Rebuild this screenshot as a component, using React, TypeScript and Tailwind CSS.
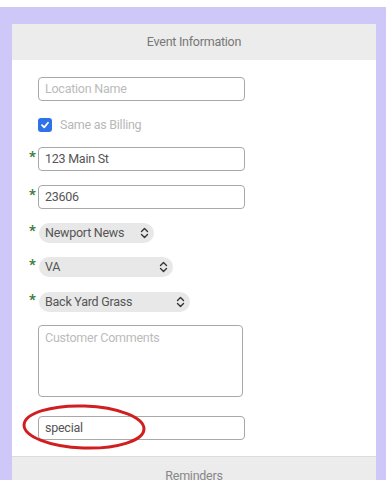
import React from "react";

const Star = ({ off }: { off: string }) => (
  <span className={`w-[9px] text-[#3f7d3a] text-[15px] font-bold leading-none ${off}`}>*</span>
);

const Chevrons = () => (
  <svg width="9" height="12" viewBox="0 0 9 12" fill="none" stroke="#333" strokeWidth="1.4" strokeLinecap="round" strokeLinejoin="round">
    <path d="M1.5 4.5 L4.5 1.5 L7.5 4.5" />
    <path d="M1.5 7.5 L4.5 10.5 L7.5 7.5" />
  </svg>
);

function Select({ label, width }: { label: string; width: string }) {
  return (
    <div className={`flex items-center justify-between h-[20px] rounded-full bg-[#e8e8e8] pl-[6px] pr-[5px] text-[12.5px] tracking-[-0.25px] text-[#555] ${width}`}>
      <span>{label}</span>
      <Chevrons />
    </div>
  );
}

const txt = "text-[12.5px] tracking-[-0.25px]";

export default function App() {
  return (
    <div className="w-[386px] h-[480px] bg-white overflow-hidden" style={{ fontFamily: "Roboto, 'Noto Sans', sans-serif" }}>
      <div className="mt-[7px] h-[473px] bg-[#cdc8f8] pt-[17px] pl-[12px] pr-[10px]">
        <div className="bg-white h-full flex flex-col overflow-hidden">
          <div className="shrink-0 h-[36px] bg-[#ececec] flex items-center justify-center text-[12.5px] tracking-[-0.25px] text-[#777]">
            Event Information
          </div>
          <div className="shrink-0 flex flex-col pl-[17px]">
            <div className={`mt-[17px] ml-[9px] w-[207px] h-[24px] border border-[#a8a8a8] rounded-[4px] flex items-center px-[6px] ${txt} text-[#bbbbbb]`}>
              Location Name
            </div>
            <div className="mt-[17px] ml-[9px] flex items-center gap-[8px] h-[14px]">
              <div className="w-[14px] h-[14px] rounded-[3px] bg-[#2f72e8] flex items-center justify-center">
                <svg width="10" height="10" viewBox="0 0 10 10" fill="none" stroke="white" strokeWidth="1.8" strokeLinecap="round" strokeLinejoin="round">
                  <path d="M2 5.2 L4.2 7.4 L8 2.8" />
                </svg>
              </div>
              <span className={`${txt} text-[#b8b8b8]`}>Same as Billing</span>
            </div>
            <div className="mt-[15px] flex items-start">
              <Star off="mt-[3px]" />
              <div className={`w-[207px] h-[24px] border border-[#a8a8a8] rounded-[4px] flex items-center px-[6px] ${txt} text-[#555]`}>
                123 Main St
              </div>
            </div>
            <div className="mt-[14px] flex items-start">
              <Star off="mt-[3px]" />
              <div className={`w-[207px] h-[24px] border border-[#a8a8a8] rounded-[4px] flex items-center px-[6px] ${txt} text-[#555]`}>
                23606
              </div>
            </div>
            <div className="mt-[14px] flex items-start">
              <Star off="mt-[1px]" />
              <div className="ml-[1px]"><Select label="Newport News" width="w-[115px]" /></div>
            </div>
            <div className="mt-[14px] flex items-start">
              <Star off="mt-[1px]" />
              <div className="ml-[1px]"><Select label="VA" width="w-[134px]" /></div>
            </div>
            <div className="mt-[15px] flex items-start">
              <Star off="mt-[1px]" />
              <div className="ml-[1px]"><Select label="Back Yard Grass" width="w-[151px]" /></div>
            </div>
            <div className={`mt-[13px] ml-[9px] w-[205px] h-[72px] border border-[#a8a8a8] rounded-[4px] px-[6px] pt-[3px] ${txt} text-[#bbbbbb]`}>
              Customer Comments
            </div>
            <div className={`relative mt-[19px] ml-[9px] w-[207px] h-[24px] border border-[#a8a8a8] rounded-[4px] flex items-center px-[6px] ${txt} text-[#555]`}>
              special
              <svg className="absolute left-[-18px] top-[-14px]" width="126" height="48" viewBox="0 0 126 48" fill="none">
                <ellipse cx="63" cy="24" rx="60" ry="21" stroke="#d01f1f" strokeWidth="3" transform="rotate(2 63 24)" />
              </svg>
            </div>
          </div>
          <div className="shrink-0 mt-[16px] h-[40px] bg-[#ececec] border-t border-[#dcdcdc] flex items-start justify-center pt-[10px] text-[12.5px] tracking-[-0.25px] text-[#888]">
            Reminders
          </div>
        </div>
      </div>
    </div>
  );
}
